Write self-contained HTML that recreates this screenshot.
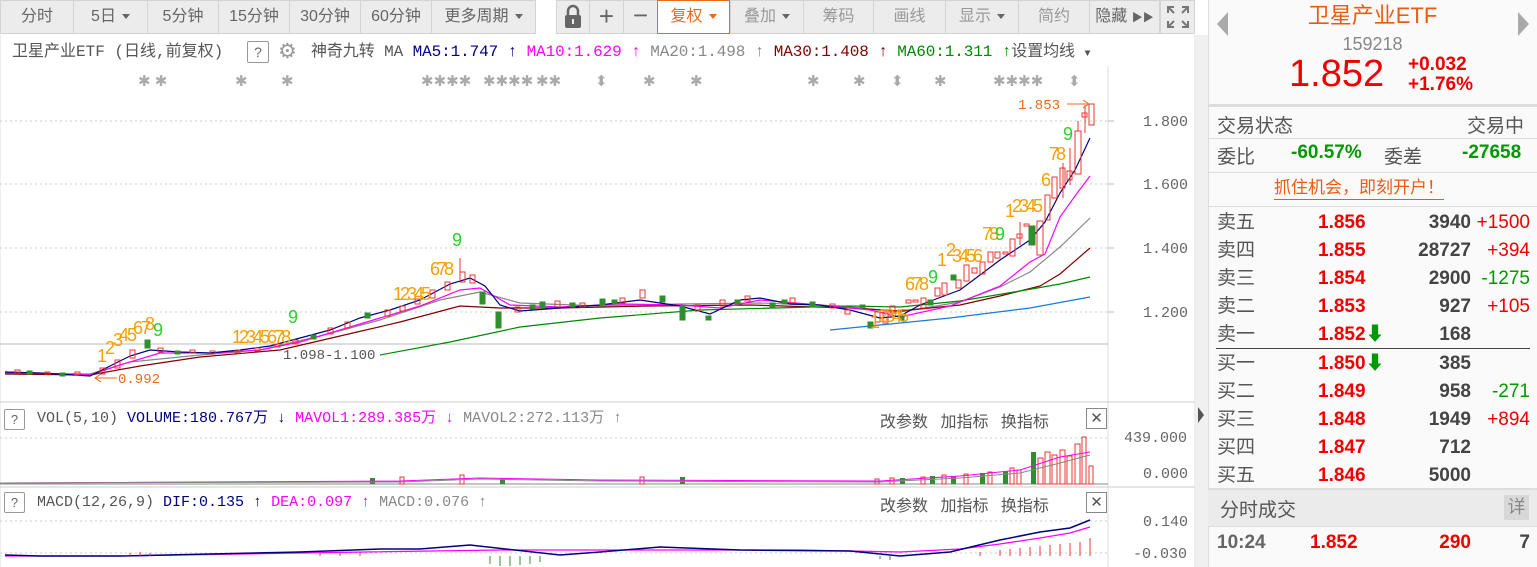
<!DOCTYPE html>
<html><head><meta charset="utf-8"><style>
*{margin:0;padding:0;box-sizing:border-box}
body{width:1537px;height:567px;overflow:hidden;background:#fff;font-family:"Liberation Sans","Noto Sans CJK SC",sans-serif;position:relative}
.tb{position:absolute;top:0;height:34px;border:1px solid #d4d4d4;background:#ececec;color:#666;font-size:16px;line-height:32px;text-align:center}
.ab{position:absolute}
.tri{display:inline-block;width:0;height:0;border-left:4px solid transparent;border-right:4px solid transparent;border-top:5px solid #666;vertical-align:middle;margin-left:6px}
.mono{font-family:"Liberation Mono","Noto Sans CJK SC",monospace}
.rp{position:absolute;left:1208px;width:329px;font-family:"Liberation Sans","Noto Sans CJK SC",sans-serif}
.row{position:absolute;left:1208px;width:329px;height:28px;font-size:19px;line-height:28px}
.row .l{position:absolute;left:9px;color:#555}
.row .p{position:absolute;left:110px;color:#e00;font-weight:bold}
.row .v{position:absolute;right:66px;color:#444;font-weight:bold}
.row .c{position:absolute;right:7px}
.hl{position:absolute;left:1208px;width:329px;height:2px;background:#ddd}
</style></head><body>
<div class="tb" style="left:0;width:74px">分时</div>
<div class="tb" style="left:73px;width:75px">5日<span class="tri"></span></div>
<div class="tb" style="left:147px;width:72px">5分钟</div>
<div class="tb" style="left:218px;width:72px">15分钟</div>
<div class="tb" style="left:289px;width:72px">30分钟</div>
<div class="tb" style="left:360px;width:72px">60分钟</div>
<div class="tb" style="left:431px;width:105px">更多周期<span class="tri"></span></div>
<div class="tb" style="left:556px;width:34px"><svg width="22" height="26" viewBox="0 0 22 26" style="margin-top:3px"><path d="M6 11V7a5 5 0 0 1 10 0v4" stroke="#666" stroke-width="2.5" fill="none"/><rect x="3" y="11" width="16" height="13" rx="2" fill="#666"/><rect x="10" y="15" width="2" height="5" fill="#ececec"/></svg></div>
<div class="tb" style="left:589px;width:35px;font-size:26px;line-height:30px">+</div>
<div class="tb" style="left:623px;width:35px;font-size:26px;line-height:28px">−</div>
<div class="tb" style="left:657px;width:73px;background:#fff;border:1px solid #ec6a1c;color:#ec6a1c">复权<span class="tri" style="border-top-color:#ec6a1c"></span></div>
<div class="tb" style="left:730px;width:74px;color:#999">叠加<span class="tri"></span></div>
<div class="tb" style="left:803px;width:71px;color:#999">筹码</div>
<div class="tb" style="left:873px;width:73px;color:#999">画线</div>
<div class="tb" style="left:945px;width:74px;color:#999">显示<span class="tri"></span></div>
<div class="tb" style="left:1018px;width:72px;color:#999">简约</div>
<div class="tb" style="left:1089px;width:71px">隐藏 <span style="font-size:11px">▶▶</span></div>
<div class="tb" style="left:1160px;width:35px"><svg width="24" height="24" viewBox="0 0 24 24" style="margin-top:4px" stroke="#777" stroke-width="2" fill="none"><path d="M2 8V2h6M2 2l6 6M22 8V2h-6M22 2l-6 6M2 16v6h6M2 22l6-6M22 16v6h-6M22 22l-6-6"/></svg></div>

<div class="ab mono" style="left:12px;top:42px;font-size:16px;line-height:20px;white-space:nowrap;color:#555">卫星产业ETF (日线,前复权)</div>
<div class="ab" style="left:247px;top:41px;width:22px;height:22px;border:1px solid #999;border-radius:2px;color:#666;font-size:14px;text-align:center;line-height:20px">?</div>
<div class="ab" style="left:278px;top:41px;font-size:21px;color:#999;line-height:22px">⚙</div>
<div class="ab mono" style="left:311px;top:42px;font-size:16px;line-height:20px;white-space:nowrap;letter-spacing:-0.1px"><span style="color:#555">神奇九转 MA </span><span style="color:#000080">MA5:1.747 ↑</span> <span style="color:#f0f">MA10:1.629 ↑</span> <span style="color:#888">MA20:1.498 ↑</span> <span style="color:#800000">MA30:1.408 ↑</span> <span style="color:#080">MA60:1.311 ↑</span><span style="color:#555">设置均线 <span style="font-size:10px">▼</span></span></div>

<svg class="ab" style="left:0;top:0" width="1208" height="567" viewBox="0 0 1208 567">
<line x1="0" y1="35" x2="0" y2="567" stroke="#ddd"/>
<line x1="1108" y1="66" x2="1108" y2="567" stroke="#ddd"/>
<line x1="1195" y1="35" x2="1195" y2="567" stroke="#ddd"/>
<rect x="1196" y="35" width="12" height="532" fill="#f0f0f0"/>
<path d="M1198 407l6 8-6 8z" fill="#555"/>
<g stroke="#ccc" stroke-dasharray="2 3">
<line x1="0" y1="121" x2="1108" y2="121"/><line x1="0" y1="184" x2="1108" y2="184"/><line x1="0" y1="248" x2="1108" y2="248"/><line x1="0" y1="312" x2="1108" y2="312"/>
<line x1="0" y1="438" x2="1108" y2="438"/><line x1="0" y1="521" x2="1108" y2="521"/><line x1="0" y1="553" x2="1108" y2="553"/>
</g>
<g stroke="#bbb"><line x1="1108" y1="121" x2="1114" y2="121"/><line x1="1108" y1="184" x2="1114" y2="184"/><line x1="1108" y1="248" x2="1114" y2="248"/><line x1="1108" y1="312" x2="1114" y2="312"/></g>
<line x1="0" y1="344" x2="1108" y2="344" stroke="#bbb"/>
<line x1="0" y1="402" x2="1195" y2="402" stroke="#ccc"/>
<line x1="0" y1="484" x2="1108" y2="484" stroke="#888"/>
<line x1="0" y1="487" x2="1195" y2="487" stroke="#ccc"/>
<g font-family="Liberation Mono,monospace" font-size="15" fill="#666">
<text x="1143" y="126">1.800</text><text x="1143" y="189">1.600</text><text x="1143" y="253">1.400</text><text x="1143" y="317">1.200</text>
<text x="1124" y="442">439.000</text><text x="1143" y="478">0.000</text>
<text x="1143" y="526">0.140</text><text x="1133" y="558">-0.030</text>
</g>
<g font-size="15" fill="#aaa" font-family="Liberation Sans,sans-serif">
<text x="138" y="86">✱ ✱</text><text x="235" y="86">✱</text><text x="281" y="86">✱</text><text x="421" y="86">✱✱✱✱</text><text x="483" y="86">✱✱✱✱</text><text x="536" y="86">✱✱</text><text x="595" y="86">⬍</text><text x="643" y="86">✱</text><text x="690" y="86">✱</text><text x="807" y="86">✱</text><text x="853" y="86">✱</text><text x="891" y="86">⬍</text><text x="934" y="86">✱</text><text x="993" y="86">✱✱✱✱</text><text x="1068" y="86">⬍</text>
</g>
<g fill="none" stroke-width="1.2">
<polyline stroke="#888" points="5,373 90,374 130,362 200,355 260,350 320,336 380,320 440,300 480,292 520,303 600,306 680,304 760,303 840,306 900,312 960,302 1000,287 1030,272 1060,247 1090,218"/>
<polyline stroke="#800000" points="5,374 90,375 140,366 200,357 280,350 340,336 400,322 460,306 500,308 560,308 650,306 750,305 850,308 900,311 960,305 1000,296 1040,286 1060,274 1090,248"/>
<polyline stroke="#080" points="380,355 450,342 520,327 600,318 700,310 850,306 900,307 960,301 1020,291 1060,284 1090,277"/>
<polyline stroke="#1a7ad4" points="830,330 950,318 1030,308 1090,297"/>
<polyline stroke="#f0f" points="5,372 90,375 120,365 160,353 210,353 260,350 300,342 340,330 380,318 420,306 460,290 480,288 510,305 560,307 620,304 680,305 720,308 760,300 820,305 870,310 900,317 950,306 1000,286 1030,262 1045,254 1060,217 1075,196 1090,176"/>
<polyline stroke="#000080" points="5,372 40,373 90,376 110,366 130,356 150,350 180,352 210,353 240,350 270,346 300,338 330,330 360,318 390,310 420,300 450,284 470,278 485,286 500,305 520,311 560,308 600,305 640,300 680,306 710,314 740,300 760,298 790,304 820,305 850,310 880,318 900,316 920,305 960,290 1000,260 1030,240 1045,222 1060,193 1075,170 1090,138"/>
</g>
<g fill="#2f8f2f" stroke="#2f8f2f">
<rect x="27" y="371" width="5" height="3"/><rect x="60" y="373" width="5" height="3"/><rect x="145" y="340" width="5" height="8"/><rect x="175" y="351" width="5" height="3"/><rect x="311" y="335" width="5" height="4"/><rect x="365" y="313" width="5" height="5"/><rect x="480" y="292" width="5" height="12"/><rect x="496" y="312" width="5" height="16"/><rect x="540" y="302" width="5" height="6"/><rect x="600" y="299" width="5" height="6"/><rect x="660" y="296" width="5" height="6"/><rect x="680" y="306" width="5" height="14"/><rect x="706" y="316" width="5" height="4"/><rect x="770" y="303" width="5" height="5"/><rect x="810" y="302" width="5" height="5"/><rect x="860" y="305" width="5" height="3"/><rect x="868" y="322" width="5" height="6"/><rect x="899" y="316" width="5" height="4"/><rect x="928" y="300" width="5" height="5"/><rect x="951" y="275" width="5" height="5"/><rect x="1029" y="226" width="6" height="19"/>
<rect x="530" y="305" width="5" height="4"/><rect x="570" y="303" width="5" height="4"/><rect x="612" y="300" width="5" height="4"/><rect x="735" y="300" width="5" height="4"/><rect x="782" y="300" width="5" height="4"/>
</g>
<g fill="none" stroke="#e33">
<rect x="15" y="370" width="5" height="3"/><rect x="45" y="372" width="5" height="2"/><rect x="75" y="372" width="5" height="3"/><rect x="100" y="368" width="5" height="6"/><rect x="115" y="360" width="5" height="8"/><rect x="130" y="350" width="5" height="8"/><rect x="158" y="348" width="5" height="4"/><rect x="190" y="350" width="5" height="3"/><rect x="210" y="351" width="5" height="3"/><rect x="235" y="350" width="5" height="3"/><rect x="255" y="348" width="5" height="3"/><rect x="275" y="344" width="5" height="3"/><rect x="293" y="340" width="5" height="4"/><rect x="328" y="328" width="5" height="6"/><rect x="345" y="322" width="5" height="6"/><rect x="385" y="310" width="5" height="6"/><rect x="400" y="306" width="5" height="5"/><rect x="415" y="299" width="5" height="5"/><rect x="430" y="290" width="5" height="8"/><rect x="445" y="282" width="5" height="8"/><rect x="460" y="272" width="5" height="10"/><rect x="470" y="275" width="5" height="8"/><rect x="515" y="307" width="5" height="5"/><rect x="555" y="301" width="5" height="6"/><rect x="580" y="303" width="5" height="4"/><rect x="620" y="298" width="5" height="5"/><rect x="640" y="290" width="5" height="8"/><rect x="695" y="305" width="5" height="6"/><rect x="720" y="300" width="5" height="6"/><rect x="745" y="296" width="5" height="5"/><rect x="790" y="298" width="5" height="5"/><rect x="830" y="304" width="5" height="4"/><rect x="845" y="310" width="5" height="4"/>
<rect x="875" y="312" width="5" height="10"/><rect x="883" y="312" width="5" height="11"/><rect x="890" y="306" width="5" height="7"/><rect x="906" y="300" width="5" height="3"/><rect x="913" y="300" width="5" height="2"/><rect x="921" y="298" width="5" height="10"/><rect x="935" y="288" width="5" height="8"/><rect x="942" y="283" width="5" height="12"/><rect x="956" y="280" width="5" height="8"/><rect x="964" y="265" width="5" height="16"/><rect x="972" y="268" width="5" height="5"/><rect x="980" y="262" width="5" height="12"/><rect x="988" y="252" width="5" height="10"/><rect x="995" y="252" width="5" height="6"/><rect x="1003" y="252" width="5" height="2"/><rect x="1010" y="239" width="5" height="17"/><rect x="1017" y="234" width="5" height="4"/><rect x="1024" y="224" width="5" height="2"/><rect x="1037" y="221" width="6" height="34"/><rect x="1045" y="195" width="5" height="25"/><rect x="1052" y="177" width="5" height="21"/><rect x="1060" y="168" width="5" height="20"/><rect x="1067" y="171" width="5" height="9"/><rect x="1075" y="131" width="6" height="43"/><rect x="1082" y="113" width="5" height="4"/><rect x="1089" y="104" width="5" height="21"/>
<line x1="1063" y1="163" x2="1063" y2="198"/><line x1="1070" y1="148" x2="1070" y2="185"/><line x1="1078" y1="131" x2="1078" y2="121"/><line x1="1085" y1="105" x2="1085" y2="133"/><line x1="1020" y1="222" x2="1020" y2="245"/><line x1="460" y1="258" x2="460" y2="272"/>
</g>
<g font-family="Liberation Sans,sans-serif" font-size="18" fill="#f5a000">
<text x="97" y="362" letter-spacing="-3">1</text><text x="105" y="354" letter-spacing="-3">2</text><text x="113" y="346">3</text><text x="119" y="341" letter-spacing="-2">45</text><text x="133" y="334" letter-spacing="-2">67</text><text x="145" y="330">8</text>
<text x="232" y="343" letter-spacing="-3">12345678</text>
<text x="393" y="300" letter-spacing="-3">12345</text><text x="430" y="275" letter-spacing="-3">678</text>
<text x="870" y="328">1</text><text x="878" y="322" letter-spacing="-3">2345</text><text x="905" y="290" letter-spacing="-3">678</text>
<text x="937" y="266">1</text><text x="946" y="256">2</text><text x="952" y="262" letter-spacing="-3">3456</text><text x="982" y="240" letter-spacing="-3">78</text>
<text x="1005" y="217">1</text><text x="1012" y="212" letter-spacing="-3">2345</text><text x="1041" y="186">6</text><text x="1049" y="160" letter-spacing="-3">78</text>
</g>
<g font-family="Liberation Sans,sans-serif" font-size="18" fill="#2ad12a">
<text x="153" y="336">9</text><text x="288" y="323">9</text><text x="452" y="246">9</text><text x="928" y="283">9</text><text x="995" y="240">9</text><text x="1063" y="140">9</text>
</g>
<g font-family="Liberation Mono,monospace" font-size="14">
<text x="1018" y="109" fill="#ec6a1c">1.853</text><path d="M1067 104h22M1083 100l6 4-6 4" stroke="#ec6a1c" fill="none"/>
<text x="118" y="383" fill="#ec6a1c">0.992</text><path d="M117 378h-22M101 374l-6 4 6 4" stroke="#ec6a1c" fill="none"/>
<text x="283" y="359" fill="#555">1.098-1.100</text>
</g>
<g fill="#2f8f2f"><rect x="900" y="478" width="5" height="6"/><rect x="930" y="476" width="5" height="8"/><rect x="951" y="476" width="5" height="8"/><rect x="980" y="473" width="5" height="11"/><rect x="1003" y="471" width="5" height="13"/><rect x="1031" y="452" width="5" height="32"/><rect x="500" y="478" width="5" height="6"/><rect x="680" y="477" width="5" height="7"/><rect x="370" y="478" width="5" height="6"/></g>
<g fill="none" stroke="#e33"><rect x="875" y="479" width="4" height="5"/><rect x="890" y="478" width="4" height="6"/><rect x="921" y="477" width="4" height="7"/><rect x="942" y="475" width="4" height="9"/><rect x="964" y="474" width="4" height="10"/><rect x="988" y="472" width="4" height="12"/><rect x="1010" y="468" width="4" height="16"/><rect x="1017" y="470" width="4" height="14"/><rect x="1038" y="458" width="5" height="26"/><rect x="1045" y="452" width="5" height="32"/><rect x="1052" y="455" width="5" height="29"/><rect x="1060" y="450" width="5" height="34"/><rect x="1067" y="456" width="5" height="28"/><rect x="1075" y="444" width="5" height="40"/><rect x="1082" y="437" width="4" height="47"/><rect x="1089" y="466" width="4" height="18"/><rect x="400" y="477" width="4" height="7"/><rect x="460" y="475" width="4" height="9"/><rect x="640" y="477" width="4" height="7"/></g>
<polyline fill="none" stroke="#f0f" points="0,483 400,481 480,478 600,480 880,481 960,476 1020,470 1060,457 1090,452"/>
<polyline fill="none" stroke="#888" points="0,483 400,482 480,479 600,481 880,482 960,478 1020,473 1060,463 1090,455"/>
<polyline fill="none" stroke="#f0f" stroke-width="1.3" points="5,556 120,556 300,553 500,550 800,550 900,552 960,549 1000,544 1040,538 1070,533 1090,527"/>
<polyline fill="none" stroke="#000080" stroke-width="1.5" points="5,555 40,556 120,556 300,552 380,549 420,549 470,545 560,555 600,552 660,547 740,550 850,551 900,556 950,552 1000,540 1040,532 1070,528 1090,520"/>
<g stroke="#e33"><path d="M980 556v-4M1000 556v-6M1010 556v-7M1020 556v-8M1030 556v-9M1040 556v-10M1050 556v-11M1060 556v-12M1070 556v-13M1080 556v-14M1090 556v-18M130 556v-3M140 556v-4M150 556v-3M320 556v-3M340 556v-4M360 556v-4"/></g>
<g stroke="#2f8f2f"><path d="M490 556v8M500 556v10M510 556v10M520 556v9M530 556v8M540 556v6M880 556v3M890 556v4"/></g>
</svg>

<div class="ab" style="left:4px;top:409px;width:21px;height:21px;border:1px solid #999;border-radius:2px;color:#666;font-size:13px;text-align:center;line-height:19px;background:#fff">?</div>
<div class="ab mono" style="left:37px;top:409px;font-size:15px;line-height:20px;white-space:nowrap"><span style="color:#555">VOL(5,10) </span><span style="color:#000080">VOLUME:180.767万 ↓</span> <span style="color:#f0f">MAVOL1:289.385万 ↓</span> <span style="color:#888">MAVOL2:272.113万 ↑</span></div>
<div class="ab" style="left:880px;top:408px;font-size:16px;color:#555;word-spacing:8px">改参数 加指标 换指标</div>
<div class="ab" style="left:1086px;top:408px;width:21px;height:21px;border:1px solid #888;font-size:15px;line-height:19px;text-align:center;color:#555">✕</div>
<div class="ab" style="left:4px;top:492px;width:21px;height:21px;border:1px solid #999;border-radius:2px;color:#666;font-size:13px;text-align:center;line-height:19px;background:#fff">?</div>
<div class="ab mono" style="left:37px;top:493px;font-size:15px;line-height:20px;white-space:nowrap"><span style="color:#555">MACD(12,26,9) </span><span style="color:#000080">DIF:0.135 ↑</span> <span style="color:#f0f">DEA:0.097 ↑</span> <span style="color:#888">MACD:0.076 ↑</span></div>
<div class="ab" style="left:880px;top:492px;font-size:16px;color:#555;word-spacing:8px">改参数 加指标 换指标</div>
<div class="ab" style="left:1086px;top:492px;width:21px;height:21px;border:1px solid #888;font-size:15px;line-height:19px;text-align:center;color:#555">✕</div>

<div class="rp" style="top:0;height:567px;background:#fafafa;border-left:1px solid #ddd"></div>
<div class="ab" style="left:1217px;top:12px;width:0;height:0;border-top:12px solid transparent;border-bottom:12px solid transparent;border-right:11px solid #aaa"></div>
<div class="ab" style="left:1518px;top:12px;width:0;height:0;border-top:12px solid transparent;border-bottom:12px solid transparent;border-left:11px solid #aaa"></div>
<div class="rp" style="top:2px;text-align:center;font-size:22px;color:#ec5a10;line-height:28px">卫星产业ETF</div>
<div class="rp" style="top:33px;text-align:center;font-size:18px;color:#888;line-height:22px">159218</div>
<div class="ab" style="left:1289px;top:52px;font-size:38px;color:#e00;line-height:44px">1.852</div>
<div class="ab" style="left:1408px;top:55px;font-size:19px;color:#e00;font-weight:bold;line-height:20px">+0.032<br>+1.76%</div>
<div class="hl" style="top:104px;height:3px"></div>
<div class="ab" style="left:1217px;top:111px;font-size:19px;color:#555">交易状态</div>
<div class="ab" style="left:1467px;top:111px;font-size:19px;color:#555">交易中</div>
<div class="hl" style="top:138px;height:1px"></div>
<div class="ab" style="left:1217px;top:142px;font-size:19px;color:#555">委比</div>
<div class="ab" style="left:1291px;top:142px;font-size:19px;color:#090;font-weight:bold">-60.57%</div>
<div class="ab" style="left:1384px;top:142px;font-size:19px;color:#555">委差</div>
<div class="ab" style="left:1462px;top:142px;font-size:19px;color:#090;font-weight:bold">-27658</div>
<div class="hl" style="top:172px;height:1px"></div>
<div class="ab" style="left:1274px;top:177px;font-size:17px;color:#ec5a10;border-bottom:1px solid #ec5a10;line-height:22px">抓住机会，即刻开户！</div>
<div class="hl" style="top:206px;height:1px"></div>

<div class="row" style="top:209px"><span class="l">卖五</span><span class="p">1.856</span><span class="v">3940</span><span class="c" style="color:#e00">+1500</span></div>
<div class="row" style="top:237px"><span class="l">卖四</span><span class="p">1.855</span><span class="v">28727</span><span class="c" style="color:#e00">+394</span></div>
<div class="row" style="top:265px"><span class="l">卖三</span><span class="p">1.854</span><span class="v">2900</span><span class="c" style="color:#090">-1275</span></div>
<div class="row" style="top:293px"><span class="l">卖二</span><span class="p">1.853</span><span class="v">927</span><span class="c" style="color:#e00">+105</span></div>
<div class="row" style="top:321px"><span class="l">卖一</span><span class="p">1.852<span style="color:#090">⬇</span></span><span class="v">168</span></div>
<div class="ab" style="left:1216px;top:348px;width:314px;height:1px;background:#444"></div>
<div class="row" style="top:350px"><span class="l">买一</span><span class="p">1.850<span style="color:#090">⬇</span></span><span class="v">385</span></div>
<div class="row" style="top:378px"><span class="l">买二</span><span class="p">1.849</span><span class="v">958</span><span class="c" style="color:#090">-271</span></div>
<div class="row" style="top:406px"><span class="l">买三</span><span class="p">1.848</span><span class="v">1949</span><span class="c" style="color:#e00">+894</span></div>
<div class="row" style="top:434px"><span class="l">买四</span><span class="p">1.847</span><span class="v">712</span></div>
<div class="row" style="top:462px"><span class="l">买五</span><span class="p">1.846</span><span class="v">5000</span></div>
<div class="rp" style="top:488px;height:39px;background:#ebebeb;border-top:2px solid #ddd;border-bottom:1px solid #ddd"></div>
<div class="ab" style="left:1220px;top:495px;font-size:19px;color:#555">分时成交</div>
<div class="ab" style="left:1504px;top:495px;width:25px;height:25px;background:#d8d8d8;color:#888;font-size:18px;text-align:center;line-height:25px">详</div>
<div class="row" style="top:529px"><span class="l" style="color:#666;font-weight:bold">10:24</span><span class="p" style="left:102px">1.852</span><span class="v" style="color:#e00">290</span><span class="c" style="color:#444;font-weight:bold">7</span></div>
</body></html>
